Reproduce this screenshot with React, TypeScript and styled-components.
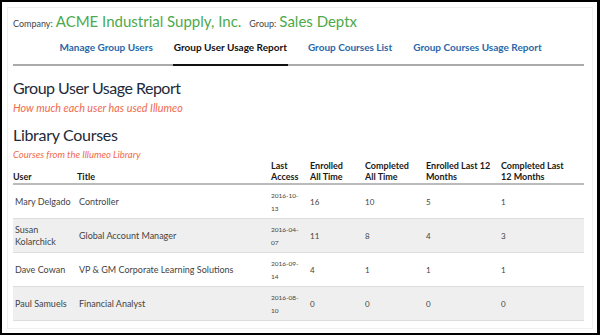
import React from "react"
import styled, { createGlobalStyle } from "styled-components"

const GlobalStyle = createGlobalStyle`
  body {
    margin: 0;
    font-family: Lato, "Open Sans", sans-serif;
    background: #fff;
  }
`

const Frame = styled.div`
  width: 600px;
  height: 335px;
  box-sizing: border-box;
  border: 2px solid #000;
  border-right-width: 3px;
  background: #fff;
  padding: 5px 4px 4px 5px;
  overflow: hidden;
`

const Panel = styled.div`
  height: 100%;
  box-sizing: border-box;
  border: 1px solid #f0f0f0;
  padding: 1px 8px 0 5px;
`

const CompanyLine = styled.div`
  display: flex;
  align-items: baseline;
  gap: 3px;
  height: 24px;
  line-height: 24px;
`

const SmallLabel = styled.span`
  font-size: 9px;
  color: #444;
  margin-left: ${p => (p.$gap ? "5px" : "0")};
`

const GreenName = styled.span`
  font-size: 15px;
  color: #4caa4c;
`

const Nav = styled.div`
  display: flex;
  justify-content: center;
  gap: 19px;
  margin-top: 5px;
  padding-left: 4px;
  border-bottom: 2px solid #aaa;
`

const Tab = styled.div`
  font-size: 10px;
  line-height: 13px;
  font-weight: 700;
  color: ${p => (p.$active ? "#111" : "#2a67a8")};
  padding: 3px 1px 10px;
  margin-bottom: -2px;
  border-bottom: 2px solid ${p => (p.$active ? "#111" : "transparent")};
`

const PageTitle = styled.h1`
  margin: 11px 0 0;
  font-size: 16px;
  letter-spacing: -0.5px;
  font-weight: 400;
  color: #1d2a3a;
  line-height: 22px;
`

const Subtitle = styled.div`
  font-size: ${p => (p.$small ? "9.5px" : "10.8px")};
  line-height: ${p => (p.$small ? "11px" : "14px")};
  font-style: italic;
  color: #ef6a4e;
  margin-top: ${p => (p.$small ? "4px" : "2px")};
`

const SectionTitle = styled.h2`
  margin: 10px 0 0;
  font-size: 16px;
  letter-spacing: -0.3px;
  font-weight: 400;
  color: #1d2a3a;
  line-height: 20px;
`

const Table = styled.table`
  width: 571px;
  border-collapse: collapse;
`

const HeadCell = styled.th`
  text-align: left;
  vertical-align: bottom;
  font-size: 9px;
  font-weight: 700;
  color: #1a1a1a;
  line-height: 11px;
  padding: 0 0 1px;
  border-bottom: 2px solid #bbb;
`

const Row = styled.tr`
  background: ${p => (p.$shade ? "#efefef" : "#fff")};
  border-bottom: 1px solid #ddd;
`

const Cell = styled.td`
  height: 33px;
  font-size: 9px;
  color: #444;
  line-height: 12px;
  padding: 0 0 0 2px;
  vertical-align: middle;
`

const DateCell = styled(Cell)`
  font-size: 6.5px;
  line-height: 13px;
  padding-left: 0;
`

const NumCell = styled(Cell)`
  font-size: 8px;
  padding-left: 0;
`

const rows = [
  { user: "Mary Delgado", title: "Controller", date: ["2016-10-", "13"], n: ["16", "10", "5", "1"] },
  { user: "Susan Kolarchick", title: "Global Account Manager", date: ["2016-04-", "07"], n: ["11", "8", "4", "3"] },
  { user: "Dave Cowan", title: "VP & GM Corporate Learning Solutions", date: ["2016-09-", "14"], n: ["4", "1", "1", "1"] },
  { user: "Paul Samuels", title: "Financial Analyst", date: ["2016-08-", "10"], n: ["0", "0", "0", "0"] },
]

export default function App() {
  return (
    <>
      <GlobalStyle />
      <Frame>
        <Panel>
          <CompanyLine>
            <SmallLabel>Company:</SmallLabel>
            <GreenName>ACME Industrial Supply, Inc.</GreenName>
            <SmallLabel $gap>Group:</SmallLabel>
            <GreenName>Sales Deptx</GreenName>
          </CompanyLine>
          <Nav>
            <Tab>Manage Group Users</Tab>
            <Tab $active>Group User Usage Report</Tab>
            <Tab>Group Courses List</Tab>
            <Tab>Group Courses Usage Report</Tab>
          </Nav>
          <PageTitle>Group User Usage Report</PageTitle>
          <Subtitle>How much each user has used Illumeo</Subtitle>
          <SectionTitle>Library Courses</SectionTitle>
          <Subtitle $small>Courses from the Illumeo Library</Subtitle>
          <Table>
            <colgroup>
              <col style={{ width: 64 }} />
              <col style={{ width: 194 }} />
              <col style={{ width: 39 }} />
              <col style={{ width: 55 }} />
              <col style={{ width: 61 }} />
              <col style={{ width: 75 }} />
              <col style={{ width: 83 }} />
            </colgroup>
            <thead>
              <tr>
                <HeadCell>User</HeadCell>
                <HeadCell>Title</HeadCell>
                <HeadCell>Last<br />Access</HeadCell>
                <HeadCell>Enrolled<br />All Time</HeadCell>
                <HeadCell>Completed<br />All Time</HeadCell>
                <HeadCell>Enrolled Last 12<br />Months</HeadCell>
                <HeadCell>Completed Last<br />12 Months</HeadCell>
              </tr>
            </thead>
            <tbody>
              {rows.map((r, i) => (
                <Row key={r.user} $shade={i % 2 === 1}>
                  <Cell>{r.user}</Cell>
                  <Cell>{r.title}</Cell>
                  <DateCell>{r.date[0]}<br />{r.date[1]}</DateCell>
                  {r.n.map((v, j) => (
                    <NumCell key={j}>{v}</NumCell>
                  ))}
                </Row>
              ))}
            </tbody>
          </Table>
        </Panel>
      </Frame>
    </>
  )
}
